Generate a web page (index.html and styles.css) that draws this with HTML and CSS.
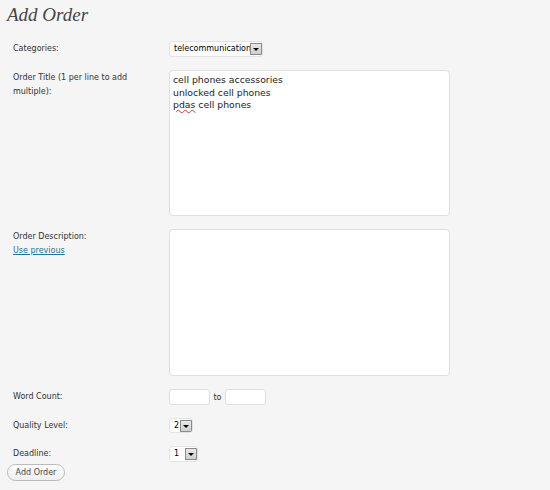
FILE: index.html
```html
<!DOCTYPE html>
<html lang="en">
<head>
	<meta charset="UTF-8">
	<title>Add Order</title>
	<link rel="stylesheet" href="styles.css">
</head>
<body>
<div class="wrap">
	<h2>Add Order</h2>
	<div class="form">
		<div class="row">
			<label>Categories:</label>
			<div class="select cat">
				<span class="val">telecommunication</span>
				<b class="arrow"></b>
			</div>
		</div>
		<div class="row">
			<label>Order Title (1 per line to add multiple):</label>
			<div class="textarea">cell phones accessories<br>unlocked cell phones<br><span class="typo">pdas</span> cell phones</div>
		</div>
		<div class="row">
			<label>Order Description:<br><a href="#">Use previous</a></label>
			<div class="textarea"></div>
		</div>
		<div class="row">
			<label>Word Count:</label>
			<div class="field">
				<span class="input"></span>
				<span class="to">to</span>
				<span class="input"></span>
			</div>
		</div>
		<div class="row">
			<label>Quality Level:</label>
			<div class="select quality">
				<span class="val">2</span>
				<b class="arrow"></b>
			</div>
		</div>
		<div class="row">
			<label>Deadline:</label>
			<div class="select deadline">
				<span class="val">1</span>
				<b class="arrow"></b>
			</div>
		</div>
	</div>
	<button class="btn">Add Order</button>
</div>
</body>
</html>
```

FILE: styles.css
```css
html,body{
	margin: 0;
	padding: 0;
	background: #f5f5f5;
}
body{
	font-family: 'DejaVu Sans', Verdana, sans-serif;
	font-size: 8px;
	color: #333;
}
.wrap{
	width: 550px;
	height: 490px;
	padding-left: 7px;
	box-sizing: border-box;
}
h2{
	margin: 0;
	padding-top: 3px;
	height: 24px;
	line-height: 24px;
	font-family: 'Liberation Serif', Georgia, serif;
	font-style: italic;
	font-weight: normal;
	font-size: 19px;
	color: #464646;
}
.form{
	display: flex;
	flex-direction: column;
	gap: 13px;
	margin-top: 14px;
}
.row{
	display: flex;
	align-items: flex-start;
}
.row label{
	flex: none;
	width: 162px;
	padding-left: 6px;
	padding-right: 30px;
	box-sizing: border-box;
	line-height: 14px;
	margin-top: 1px;
	color: #333;
}
.row label a{
	color: #21759b;
}
.select{
	display: flex;
	align-items: center;
	height: 16px;
	box-sizing: border-box;
	background: #fff;
	border: 1px solid #e3e3e3;
	border-radius: 3px;
	padding-left: 4px;
	color: #000;
	overflow: hidden;
}
.select .val{
	white-space: nowrap;
	overflow: hidden;
	line-height: 14px;
}
.select .arrow{
	flex: none;
	width: 12px;
	height: 12px;
	box-sizing: border-box;
	border: 1px solid #8a8a8a;
	background: linear-gradient(#e8e8e8, #cfcfcf);
	display: flex;
	align-items: center;
	justify-content: center;
}
.select .arrow:after{
	content: '';
	border-top: 3px solid #000;
	border-left: 3px solid transparent;
	border-right: 3px solid transparent;
	margin-top: 1px;
}
.cat{
	width: 94px;
}
.cat .val{
	width: 77px;
}
.quality{
	width: 24px;
	height: 15px;
}
.quality .val{
	width: 6px;
}
.deadline{
	width: 29px;
}
.deadline .val{
	width: 11px;
}
.textarea{
	width: 281px;
	height: 146px;
	box-sizing: border-box;
	background: #fff;
	border: 1px solid #dfdfdf;
	border-radius: 4px;
	padding: 3px 3px;
	font-size: 9.3px;
	line-height: 12.5px;
	color: #222;
}
.row:nth-child(3) .textarea{
	height: 147px;
}
.typo{
	text-decoration: underline wavy #e03030;
	text-decoration-thickness: 1px;
	text-underline-offset: 1px;
}
.field{
	display: flex;
	align-items: center;
}
.input{
	width: 41px;
	height: 16px;
	box-sizing: border-box;
	background: #fff;
	border: 1px solid #dfdfdf;
	border-radius: 3px;
}
.to{
	width: 15px;
	text-align: center;
	color: #333;
}
.btn{
	display: block;
	margin-top: 2px;
	width: 58px;
	height: 17px;
	padding: 0;
	font-family: 'DejaVu Sans', Verdana, sans-serif;
	font-size: 8px;
	color: #464646;
	border: 1px solid #bbb;
	border-radius: 9px;
	background: linear-gradient(#fefefe, #efefef);
}
```
